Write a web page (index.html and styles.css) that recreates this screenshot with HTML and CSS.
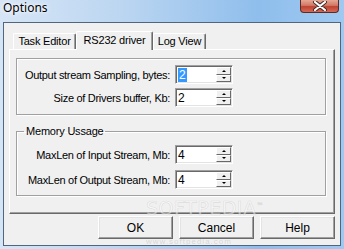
FILE: index.html
```html
<!DOCTYPE html>
<html lang="en">

<head>
    <meta charset="UTF-8">
    <title>Options</title>
    <link rel="stylesheet" href="styles.css">
</head>

<body>
    <div class="titlebar">
        <span class="title">Options</span>
        <div class="close">
            <svg width="16" height="10" viewBox="0 0 16 10">
                <path d="M3 1 L13 9 M13 1 L3 9" stroke="#3a2a2a" stroke-width="4" stroke-linecap="round"/>
                <path d="M3 1 L13 9 M13 1 L3 9" stroke="#ffffff" stroke-width="2.2" stroke-linecap="round"/>
            </svg>
        </div>
    </div>

    <div class="client">
        <div class="tabs">
            <div class="tab tab-first">Task Editor</div>
            <div class="tab active">RS232 driver</div>
            <div class="tab tab-last">Log View</div>
        </div>

        <div class="panel">
            <fieldset class="group">
                <div class="row">
                    <label>Output stream Sampling, bytes:</label>
                    <div class="spin">
                        <span class="value"><span class="selected">2</span></span>
                        <span class="arrows"><span class="arr up"></span><span class="arr down"></span></span>
                    </div>
                </div>
                <div class="row">
                    <label>Size of Drivers buffer, Kb:</label>
                    <div class="spin">
                        <span class="value">2</span>
                        <span class="arrows"><span class="arr up"></span><span class="arr down"></span></span>
                    </div>
                </div>
            </fieldset>

            <fieldset class="group group-memory">
                <legend>Memory Ussage</legend>
                <div class="row">
                    <label>MaxLen of Input Stream, Mb:</label>
                    <div class="spin">
                        <span class="value">4</span>
                        <span class="arrows"><span class="arr up"></span><span class="arr down"></span></span>
                    </div>
                </div>
                <div class="row">
                    <label>MaxLen of Output Stream, Mb:</label>
                    <div class="spin">
                        <span class="value">4</span>
                        <span class="arrows"><span class="arr up"></span><span class="arr down"></span></span>
                    </div>
                </div>
            </fieldset>
        </div>

        <div class="buttons">
            <button class="btn">OK</button>
            <button class="btn">Cancel</button>
            <button class="btn">Help</button>
        </div>

        <div class="watermark">
            <div class="wm-big">SOFTPEDIA<sup>™</sup></div>
            <div class="wm-small">www.softpedia.com</div>
        </div>
    </div>
</body>

</html>
```

FILE: styles.css
```css
body {
    margin: 0;
    width: 344px;
    height: 249px;
    overflow: hidden;
    font-family: "Liberation Sans", Arial, sans-serif;
    font-size: 11px;
    color: #000;
    background: linear-gradient(to right, #d6e5f6 0%, #bcd6f1 35%, #8fbeec 75%, #9fc9f1 100%);
}

.titlebar {
    height: 22px;
    display: flex;
    justify-content: space-between;
    align-items: flex-start;
    padding-left: 3px;
    box-sizing: border-box;
}

.title {
    font-family: "Noto Sans", sans-serif;
    font-size: 12px;
    line-height: 16px;
    text-shadow: 0 0 6px #fff, 0 0 3px #fff;
}

.close {
    width: 39px;
    height: 13px;
    margin-right: 5px;
    box-sizing: border-box;
    border: 1px solid #5e2a24;
    border-top: none;
    border-radius: 0 0 4px 4px;
    background: linear-gradient(to bottom, #e6a894 0%, #d27866 45%, #bf4332 55%, #d36b56 100%);
    display: flex;
    align-items: center;
    justify-content: center;
}

.client {
    position: relative;
    margin: 0 3px;
    height: 224px;
    box-sizing: border-box;
    border: 1px solid #50657e;
    background: #f0f0f0;
}

/* tab strip */
.tabs {
    display: flex;
    align-items: flex-end;
    height: 26px;
    padding-left: 9px;
}

.tab {
    height: 16px;
    box-sizing: border-box;
    border: 1px solid;
    border-color: #fff #696969 transparent #fff;
    border-bottom: none;
    border-radius: 2px 2px 0 0;
    box-shadow: inset -1px 0 #a0a0a0;
    text-align: center;
    line-height: 15px;
    letter-spacing: -0.2px;
}

.tab-first {
    width: 63px;
}

.tab-last {
    width: 53px;
}

.tab.active {
    position: relative;
    z-index: 1;
    width: 77px;
    height: 19px;
    margin-bottom: -1px;
    background: #f0f0f0;
    line-height: 17px;
}

/* tab page */
.panel {
    margin-left: 5px;
    width: 326px;
    height: 165px;
    box-sizing: border-box;
    border: 1px solid;
    border-color: #fff #696969 #696969 #fff;
    box-shadow: inset -1px -1px #a0a0a0;
    padding: 8px 0 0 6px;
}

.group {
    margin: 0;
    width: 310px;
    min-width: 0;
    box-sizing: border-box;
    border: 1px solid #a0a0a0;
    box-shadow: inset 1px 1px #fff, 1px 1px #fff;
    padding: 6px 0 7px 1px;
    display: grid;
    row-gap: 4px;
}

.group-memory {
    margin-top: 10px;
    padding-top: 7px;
    padding-bottom: 6px;
    row-gap: 6px;
}

.group legend {
    margin-left: 6px;
    padding: 0 2px;
    line-height: 13px;
    letter-spacing: -0.2px;
}

.row {
    display: grid;
    grid-template-columns: 152px 58px;
    column-gap: 5px;
    align-items: center;
}

.row label {
    justify-self: end;
    letter-spacing: -0.3px;
}

/* spin edit */
.spin {
    height: 19px;
    box-sizing: border-box;
    border: 1px solid;
    border-color: #a0a0a0 #fff #fff #a0a0a0;
    box-shadow: inset 1px 1px #696969, inset -1px -1px #e3e3e3;
    background: #fff;
    display: flex;
}

.value {
    flex: 1;
    padding: 2px 0 0 2px;
    font-size: 12px;
    line-height: 14px;
}

.selected {
    background: #3399ff;
    color: #fff;
    padding: 0 1px;
}

.arrows {
    width: 15px;
    margin: 1px 1px 1px 0;
    display: flex;
    flex-direction: column;
}

.arr {
    flex: 1;
    box-sizing: border-box;
    border: 1px solid;
    border-color: #fff #696969 #696969 #fff;
    background: #f0f0f0;
    display: flex;
    align-items: center;
    justify-content: center;
}

.arr::after {
    content: "";
    border-left: 2px solid transparent;
    border-right: 2px solid transparent;
}

.up::after {
    border-bottom: 2px solid #000;
}

.down::after {
    border-top: 2px solid #000;
}

/* dialog buttons */
.buttons {
    display: flex;
    justify-content: flex-end;
    gap: 6px;
    padding: 2px 5px 0 0;
}

.btn {
    width: 75px;
    height: 23px;
    box-sizing: border-box;
    border: 1px solid;
    border-color: #fff #696969 #696969 #fff;
    box-shadow: inset -1px -1px #a0a0a0, inset 1px 1px #e3e3e3;
    background: #f0f0f0;
    font-family: "Liberation Sans", Arial, sans-serif;
    font-size: 12px;
    padding: 0;
}

/* faint watermark over the dialog */
.watermark {
    position: absolute;
    left: 142px;
    top: 174px;
    pointer-events: none;
}

.wm-big {
    font-family: "DejaVu Sans", sans-serif;
    font-size: 19px;
    line-height: 18px;
    letter-spacing: 0.5px;
    color: rgba(255, 255, 255, 0.5);
    -webkit-text-stroke: 0.6px rgba(160, 160, 160, 0.3);
}

.wm-big sup {
    font-size: 7px;
}

.wm-small {
    margin-top: 21px;
    font-size: 8px;
    line-height: 8px;
    letter-spacing: 1px;
    color: rgba(150, 150, 150, 0.3);
}
```
